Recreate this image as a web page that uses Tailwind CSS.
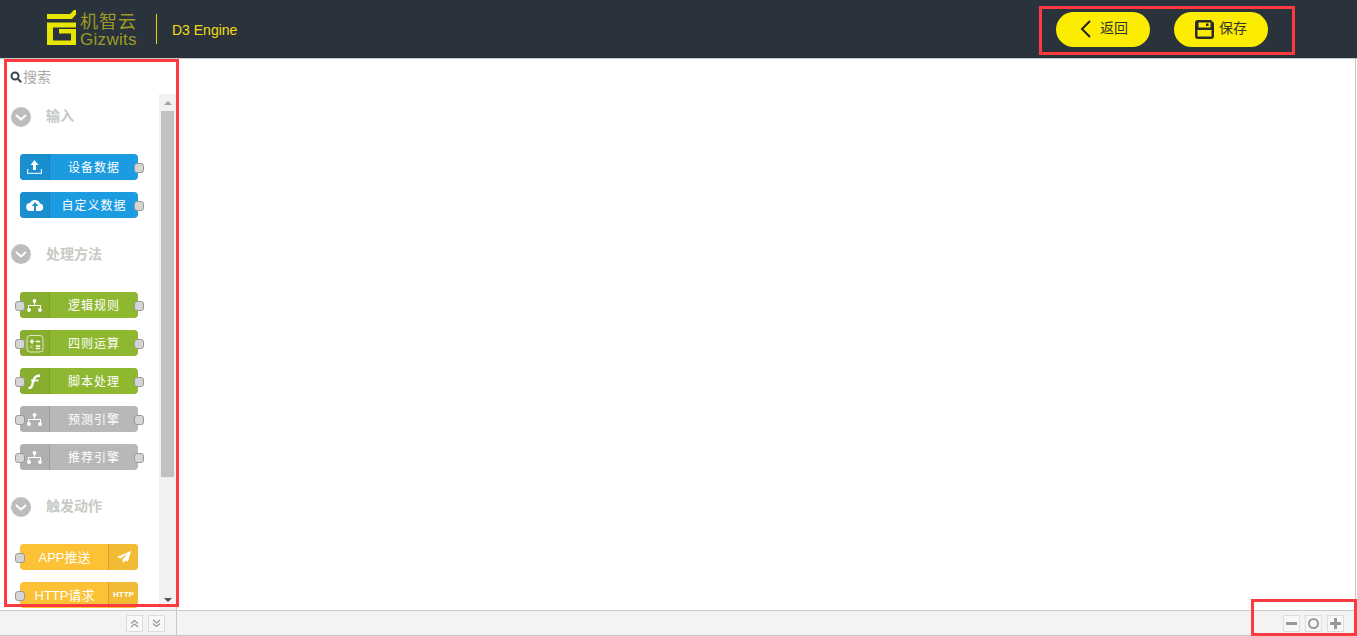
<!DOCTYPE html>
<html lang="zh-CN">

<head>
    <meta charset="UTF-8">
    <meta name="viewport" content="width=device-width, initial-scale=1.0">
    <script src="https://cdn.jsdelivr.net/npm/@tailwindcss/browser@4"></script>
    <title>D3 Engine</title>
</head>

<body class="relative w-[1357px] h-[636px] overflow-hidden bg-white font-['Liberation_Sans','Noto_Sans_CJK_SC',sans-serif]">
    <!-- header -->
    <header class="h-[59px] bg-[#2a333c] border-b border-[#c8c8c8] flex items-center">
        <svg class="ml-[47px] mb-[3px]" width="30" height="36" viewBox="0 0 30 36">
            <path d="M0 4h23l4-4h2v4.500L25 9H0z M0 12.500h29v5H6v13h18v-7H12v-4.500h17V35H0z" fill="#e6e600" />
        </svg>
        <div class="ml-[3px] w-[57px] mt-[1px] text-[#9c9c24]">
            <div class="text-[18px] leading-[20px] tracking-[1px] whitespace-nowrap">机智云</div>
            <div class="text-[17px] leading-[16px] tracking-[0.3px]">Gizwits</div>
        </div>
        <div class="ml-[19px] w-px h-[30px] bg-[#e6d800]"></div>
        <div class="ml-[15px] mt-[3px] text-[14px] text-[#f5dc14]">D3 Engine</div>
        <div class="ml-auto mr-[89px] flex gap-[24px]">
            <button class="w-[94px] h-[35px] rounded-full bg-[#fcec00] text-[#333] text-[14px] flex items-center justify-center gap-[8px] pl-[2px]">
                <svg width="12" height="18" viewBox="0 0 12 18" fill="none" stroke="#222" stroke-width="2"><path d="M10 1 2 9l8 8" /></svg>
                <span class="mb-[1px]">返回</span>
            </button>
            <button class="w-[94px] h-[35px] rounded-full bg-[#fcec00] text-[#333] text-[14px] flex items-center justify-center gap-[5px]">
                <svg width="19" height="19" viewBox="0 0 19 19">
                    <path fill-rule="evenodd" d="M3 0h13l3 3v13a3 3 0 0 1-3 3H3a3 3 0 0 1-3-3V3a3 3 0 0 1 3-3z M3.500 2.500V7.500h12V2.500z M2.500 10v6.500h14V10z" fill="#2a2a2a" />
                    <rect x="11" y="3.500" width="2.500" height="2.500" fill="#2a2a2a" />
                </svg>
                <span class="mb-[1px]">保存</span>
            </button>
        </div>
    </header>

    <div class="flex h-[551px]">
        <!-- palette -->
        <aside class="w-[177px] border-r border-[#c8c8c8] flex flex-col">
            <div class="h-[35px] flex items-center pl-[10px] pt-px shrink-0 text-[14px] text-[#a8a8a8]">
                <svg width="12" height="12" viewBox="0 0 12 12" fill="none" stroke="#3a4450" stroke-width="2"><circle cx="5" cy="5" r="3.500" /><path d="m8 8 3.200 3.200" /></svg>
                <span class="ml-px">搜索</span>
            </div>
            <div class="flex flex-1 min-h-0">
                <div class="w-[159px] overflow-hidden pt-[3px]">
                    <div class="h-[40px] flex items-center pl-[11px] text-[14px] font-bold text-[#c6cac4]">
                        <span class="w-[20px] h-[20px] rounded-full bg-[#bdbdbd] flex items-center justify-center"><svg width="12" height="7" viewBox="0 0 12 7" fill="none" stroke="#fff" stroke-width="2"><path d="m1 1 5 4.500L11 1" /></svg></span>
                        <span class="ml-[15px] mb-[2px]">输入</span>
                    </div>
                    <div class="mt-[17px] flex flex-col gap-[12px]">
                        <div class="relative ml-[20px] w-[118px] h-[26px] rounded-[4px] bg-[#1b9be0] text-white text-[12px] flex">
                            <span class="w-[30px] rounded-l-[4px] bg-[#1a8fd0] border-r border-[#1682bf] flex items-center justify-center">
                                <svg width="15" height="14" viewBox="0 0 15 14" fill="#fff"><path d="M7.500 0 11.500 5H9v5H6V5H3.500z" /><path d="M0.600 9v4.400h13.800V9" fill="none" stroke="#d8eefa" stroke-width="1.200" /></svg>
                            </span>
                            <span class="flex-1 text-center leading-[28px] tracking-[1px]">设备数据</span>
                            <span class="absolute right-[-6px] top-[9px] w-[10px] h-[10px] rounded-[3px] bg-[#d5d5d5] border border-[#999]"></span>
                        </div>
                        <div class="relative ml-[20px] w-[118px] h-[26px] rounded-[4px] bg-[#1b9be0] text-white text-[12px] flex">
                            <span class="w-[30px] rounded-l-[4px] bg-[#1a8fd0] border-r border-[#1682bf] flex items-center justify-center">
                                <svg width="18" height="14" viewBox="0 0 18 14"><path d="M4.500 13a4 4 0 0 1-.6-8A5.500 5.500 0 0 1 14 5.500 3.800 3.800 0 0 1 14 13z" fill="#fff" /><path d="M9 4 5.800 8H8v5h2V8h2.200z" fill="#1a8fd0" /></svg>
                            </span>
                            <span class="flex-1 text-center leading-[28px] tracking-[1px]">自定义数据</span>
                            <span class="absolute right-[-6px] top-[9px] w-[10px] h-[10px] rounded-[3px] bg-[#d5d5d5] border border-[#999]"></span>
                        </div>
                    </div>

                    <div class="mt-[16px] h-[40px] flex items-center pl-[11px] text-[14px] font-bold text-[#c6cac4]">
                        <span class="w-[20px] h-[20px] rounded-full bg-[#bdbdbd] flex items-center justify-center"><svg width="12" height="7" viewBox="0 0 12 7" fill="none" stroke="#fff" stroke-width="2"><path d="m1 1 5 4.500L11 1" /></svg></span>
                        <span class="ml-[15px]">处理方法</span>
                    </div>
                    <div class="mt-[18px] flex flex-col gap-[12px]">
                        <div class="relative ml-[20px] w-[118px] h-[26px] rounded-[4px] bg-[#8fb831] text-white text-[12px] flex">
                            <span class="absolute left-[-5px] top-[9px] w-[10px] h-[10px] rounded-[3px] bg-[#d5d5d5] border border-[#999]"></span>
                            <span class="w-[30px] rounded-l-[4px] bg-[#88ae2f] border-r border-[#7da12a] flex items-center justify-center">
                                <svg width="15" height="13" viewBox="0 0 15 13" fill="#fff"><circle cx="7.500" cy="2" r="1.900" /><circle cx="2" cy="11" r="1.900" /><circle cx="13" cy="11" r="1.900" /><path d="M7 3h1v3h6v4h-1V7H2v3H1V6h6z" /></svg>
                            </span>
                            <span class="flex-1 text-center leading-[28px] tracking-[1px]">逻辑规则</span>
                            <span class="absolute right-[-6px] top-[9px] w-[10px] h-[10px] rounded-[3px] bg-[#d5d5d5] border border-[#999]"></span>
                        </div>
                        <div class="relative ml-[20px] w-[118px] h-[26px] rounded-[4px] bg-[#8fb831] text-white text-[12px] flex">
                            <span class="absolute left-[-5px] top-[9px] w-[10px] h-[10px] rounded-[3px] bg-[#d5d5d5] border border-[#999]"></span>
                            <span class="w-[30px] rounded-l-[4px] bg-[#88ae2f] border-r border-[#7da12a] flex items-center justify-center">
                                <svg width="18" height="19" viewBox="0 0 18 19"><rect x="1" y="1.500" width="16" height="16.500" rx="3" fill="none" stroke="#dfe9c0" stroke-width="1" /><path d="M4 7h4v1H4z M5.500 5.500h1v4h-1z M10 7h4v1h-4z M10 11.500h4v1h-4z M10 14h4v1h-4z M4 11.500l3 3M7 11.500l-3 3" fill="#fff" stroke="#fff" stroke-width=".5" /></svg>
                            </span>
                            <span class="flex-1 text-center leading-[28px] tracking-[1px]">四则运算</span>
                            <span class="absolute right-[-6px] top-[9px] w-[10px] h-[10px] rounded-[3px] bg-[#d5d5d5] border border-[#999]"></span>
                        </div>
                        <div class="relative ml-[20px] w-[118px] h-[26px] rounded-[4px] bg-[#8fb831] text-white text-[12px] flex">
                            <span class="absolute left-[-5px] top-[9px] w-[10px] h-[10px] rounded-[3px] bg-[#d5d5d5] border border-[#999]"></span>
                            <span class="w-[30px] rounded-l-[4px] bg-[#88ae2f] border-r border-[#7da12a] flex items-center justify-center">
                                <svg width="13" height="15" viewBox="0 0 13 15" fill="none" stroke="#fff" stroke-width="2.400"><path d="M0.500 14c3.500 0 3.500-2 4.500-6s1.500-6 7-6.500" /><path d="M3 6.500h7.500" stroke-width="1.800" /></svg>
                            </span>
                            <span class="flex-1 text-center leading-[28px] tracking-[1px]">脚本处理</span>
                            <span class="absolute right-[-6px] top-[9px] w-[10px] h-[10px] rounded-[3px] bg-[#d5d5d5] border border-[#999]"></span>
                        </div>
                        <div class="relative ml-[20px] w-[118px] h-[26px] rounded-[4px] bg-[#b8b8b8] text-white text-[12px] flex">
                            <span class="absolute left-[-5px] top-[9px] w-[10px] h-[10px] rounded-[3px] bg-[#d5d5d5] border border-[#999]"></span>
                            <span class="w-[30px] rounded-l-[4px] bg-[#b0b0b0] border-r border-[#a0a0a0] flex items-center justify-center">
                                <svg width="15" height="13" viewBox="0 0 15 13" fill="#fff"><circle cx="7.500" cy="2" r="1.900" /><circle cx="2" cy="11" r="1.900" /><circle cx="13" cy="11" r="1.900" /><path d="M7 3h1v3h6v4h-1V7H2v3H1V6h6z" /></svg>
                            </span>
                            <span class="flex-1 text-center leading-[28px] tracking-[1px]">预测引擎</span>
                            <span class="absolute right-[-6px] top-[9px] w-[10px] h-[10px] rounded-[3px] bg-[#d5d5d5] border border-[#999]"></span>
                        </div>
                        <div class="relative ml-[20px] w-[118px] h-[26px] rounded-[4px] bg-[#b8b8b8] text-white text-[12px] flex">
                            <span class="absolute left-[-5px] top-[9px] w-[10px] h-[10px] rounded-[3px] bg-[#d5d5d5] border border-[#999]"></span>
                            <span class="w-[30px] rounded-l-[4px] bg-[#b0b0b0] border-r border-[#a0a0a0] flex items-center justify-center">
                                <svg width="15" height="13" viewBox="0 0 15 13" fill="#fff"><circle cx="7.500" cy="2" r="1.900" /><circle cx="2" cy="11" r="1.900" /><circle cx="13" cy="11" r="1.900" /><path d="M7 3h1v3h6v4h-1V7H2v3H1V6h6z" /></svg>
                            </span>
                            <span class="flex-1 text-center leading-[28px] tracking-[1px]">推荐引擎</span>
                            <span class="absolute right-[-6px] top-[9px] w-[10px] h-[10px] rounded-[3px] bg-[#d5d5d5] border border-[#999]"></span>
                        </div>
                    </div>

                    <div class="mt-[17px] h-[40px] flex items-center pl-[11px] text-[14px] font-bold text-[#c6cac4]">
                        <span class="w-[20px] h-[20px] rounded-full bg-[#bdbdbd] flex items-center justify-center"><svg width="12" height="7" viewBox="0 0 12 7" fill="none" stroke="#fff" stroke-width="2"><path d="m1 1 5 4.500L11 1" /></svg></span>
                        <span class="ml-[15px] mb-[2px]">触发动作</span>
                    </div>
                    <div class="mt-[17px] flex flex-col gap-[12px]">
                        <div class="relative ml-[20px] w-[118px] h-[26px] rounded-[4px] bg-[#fcc135] text-white text-[13px] flex">
                            <span class="absolute left-[-5px] top-[9px] w-[10px] h-[10px] rounded-[3px] bg-[#d5d5d5] border border-[#999]"></span>
                            <span class="flex-1 text-center leading-[28px] pl-px">APP推送</span>
                            <span class="w-[30px] rounded-r-[4px] bg-[#f2bb36] border-l border-[#dca32b] flex items-center justify-center">
                                <svg width="14" height="12" viewBox="0 0 14 12" fill="#fff"><path d="M14 0 0 6l3.500 1.500L11 2.500 5.500 8.500 6 12l2.500-2.500 2.500 1z" /></svg>
                            </span>
                        </div>
                        <div class="relative ml-[20px] w-[118px] h-[26px] rounded-[4px] bg-[#fcc135] text-white text-[13px] flex">
                            <span class="absolute left-[-5px] top-[9px] w-[10px] h-[10px] rounded-[3px] bg-[#d5d5d5] border border-[#999]"></span>
                            <span class="flex-1 text-center leading-[28px] pl-px">HTTP请求</span>
                            <span class="w-[30px] rounded-r-[4px] bg-[#f2bb36] border-l border-[#dca32b] flex items-center justify-center text-[8px] font-bold">HTTP</span>
                        </div>
                    </div>
                </div>
                <!-- scrollbar -->
                <div class="w-[17px] bg-[#f1f1f1] flex flex-col items-center">
                    <div class="h-[17px] flex items-center justify-center"><div class="w-0 h-0 border-x-[4px] border-x-transparent border-b-[4px] border-b-[#a3a3a3]"></div></div>
                    <div class="w-[13px] h-[366px] bg-[#c1c1c1]"></div>
                    <div class="mt-auto h-[20px] flex items-center justify-center"><div class="w-0 h-0 border-x-[4px] border-x-transparent border-t-[4px] border-t-[#505050]"></div></div>
                </div>
            </div>
        </aside>
        <!-- canvas -->
        <main class="flex-1 border-r border-[#c8c8c8] mr-px bg-white"></main>
    </div>

    <!-- bottom bar -->
    <footer class="h-[26px] bg-[#f3f3f3] border-y border-[#c8c8c8] flex">
        <div class="w-[177px] border-r border-[#c8c8c8] flex items-center justify-end gap-[5px] pr-[11px]">
            <button class="w-[17px] h-[17px] bg-[#f8f8f8] border border-[#ddd] flex items-center justify-center">
                <svg width="9" height="9" viewBox="0 0 9 9" fill="none" stroke="#999" stroke-width="1.200"><path d="m1 4.500 3.500-3 3.500 3M1 8l3.500-3L8 8" /></svg>
            </button>
            <button class="w-[17px] h-[17px] bg-[#f8f8f8] border border-[#ddd] flex items-center justify-center">
                <svg width="9" height="9" viewBox="0 0 9 9" fill="none" stroke="#999" stroke-width="1.200"><path d="m1 1 3.500 3L8 1M1 4.500l3.500 3 3.500-3" /></svg>
            </button>
        </div>
        <div class="flex-1 flex items-center justify-end gap-[5px] pr-[13px]">
            <button class="w-[17px] h-[17px] bg-[#f8f8f8] border border-[#ddd] flex items-center justify-center"><span class="w-[11px] h-[3px] bg-[#999]"></span></button>
            <button class="w-[17px] h-[17px] bg-[#f8f8f8] border border-[#ddd] flex items-center justify-center"><span class="w-[11px] h-[11px] rounded-full border-2 border-[#999]"></span></button>
            <button class="w-[17px] h-[17px] bg-[#f8f8f8] border border-[#ddd] flex items-center justify-center">
                <svg width="11" height="11" viewBox="0 0 11 11" fill="#999"><path d="M4 0h3v4h4v3H7v4H4V7H0V4h4z" /></svg>
            </button>
        </div>
    </footer>

    <!-- red annotation boxes drawn over the screenshot -->
    <div class="absolute left-[4px] top-[59px] w-[175px] h-[548px] border-[3px] border-[#fd3a40]"></div>
    <div class="absolute left-[1039px] top-[6px] w-[256px] h-[49px] border-[3px] border-[#fd3a40]"></div>
    <div class="absolute left-[1251px] top-[599px] w-[106px] h-[37px] border-[3px] border-[#fd3a40]"></div>
</body>

</html>
